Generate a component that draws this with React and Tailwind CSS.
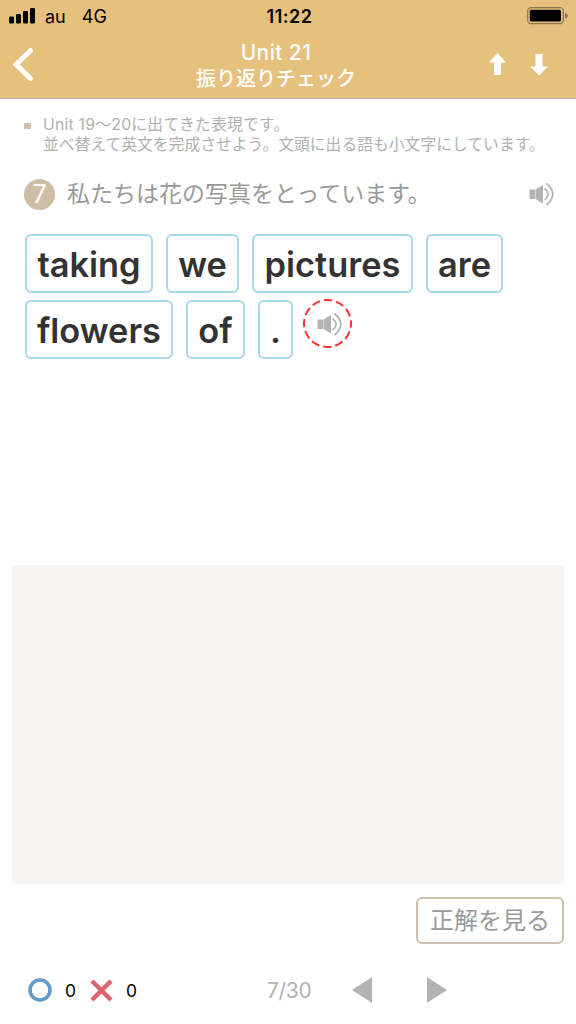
const WORDS = [
  [
    { text: 'taking', width: 'w-[128px]' },
    { text: 'we', width: 'w-[73px]' },
    { text: 'pictures', width: 'w-[161px]' },
    { text: 'are', width: 'w-[77px]' },
  ],
  [
    { text: 'flowers', width: 'w-[148px]' },
    { text: 'of', width: 'w-[59px]' },
    { text: '.', width: 'w-[35px]' },
  ],
];

const SpeakerIcon = () => (
  <svg width="26" height="24" viewBox="0 0 26 24" fill="none">
    <path d="M0.5 7.5H6V17H0.5Z" fill="#b3b3b3" />
    <path d="M6.5 7.5L14 3V21.5L6.5 17Z" fill="#b3b3b3" />
    <path d="M15.5 6.5Q22.5 12 15.5 18" stroke="#b3b3b3" strokeWidth="1.6" />
    <path d="M17.5 1.5Q30 12 17.5 23" stroke="#b3b3b3" strokeWidth="1.8" />
  </svg>
);

const StatusBar = () => (
  <div className="flex h-8 items-center text-black">
    <div className="flex flex-1 items-center pl-[9px]">
      <svg width="26" height="16" viewBox="0 0 26 16">
        <rect x="0" y="8.5" width="5" height="7" rx="1.3" />
        <rect x="7" y="6" width="5" height="9.5" rx="1.3" />
        <rect x="14" y="3" width="5" height="12.5" rx="1.3" />
        <rect x="21" y="0" width="5" height="15.5" rx="1.3" />
      </svg>
      <span className="ml-[10px] text-[18px]">au</span>
      <span className="ml-[16px] text-[18px]">4G</span>
    </div>
    <span className="pl-[2px] text-[18px] font-semibold tracking-[0.5px]">11:22</span>
    <div className="flex flex-1 justify-end pr-[8px]">
      <svg width="41" height="18" viewBox="0 0 41 18">
        <rect x="0.7" y="0.7" width="35.6" height="16" rx="3.5" fill="none" stroke="#8b744b" strokeWidth="1.3" />
        <rect x="2.8" y="2.8" width="31.2" height="11.8" rx="1.5" />
        <path d="M38 5.8Q40.8 6.8 40.8 8.8T38 11.8Z" fill="#8b744b" />
      </svg>
    </div>
  </div>
);

const Header = () => (
  <header className="h-[99px] border-b border-[#bfb5a7] bg-[#e5c17d]">
    <StatusBar />
    <div className="flex h-[66px] text-white">
      <div className="w-[110px] pl-[13px] pt-[15px]">
        <svg width="21" height="34" viewBox="0 0 21 34" fill="none">
          <path d="M17.5 3.5L3 17.5L17.5 31.5" stroke="currentColor" strokeWidth="5" strokeLinecap="round" />
        </svg>
      </div>
      <div className="w-[332px] pt-[8px] text-center font-medium">
        <h1 className="text-[21px] leading-[26px] tracking-[0.4px]">Unit 21</h1>
        <p className="text-[20px] leading-[26px]">振り返りチェック</p>
      </div>
      <div className="flex gap-[24px] pl-[47px] pt-[21px]">
        <svg width="17" height="23" viewBox="0 0 17 23" fill="currentColor">
          <path d="M8.5 0L17 9.5H12V22H5V9.5H0Z" />
        </svg>
        <svg width="18" height="23" viewBox="0 0 18 23" fill="currentColor">
          <path d="M5.5 1H12.5V13.5H18L9 22.5L0 13.5H5.5Z" />
        </svg>
      </div>
    </div>
  </header>
);

const WordChip = ({ text, width }) => (
  <button className={`${width} flex h-[59px] justify-center rounded-[6px] border-2 border-[#a5d8ea] text-[34.4px] leading-[57px] font-semibold text-[#333333]`}>
    {text}
  </button>
);

const App = () => {
  return (
    <div className="flex h-[1024px] w-[576px] flex-col overflow-hidden bg-white font-['Inter','Noto_Sans_CJK_JP',sans-serif] whitespace-nowrap">
      <Header />

      <main className="h-[466px]">
        <div className="flex h-[77px] pl-[24px] pt-[16px]">
          <span className="mt-[8px] h-[6px] w-[7px] bg-[#cfbda6]"></span>
          <p className="ml-[12px] text-[15.8px] leading-[20px] text-[#b0b0b0]">
            <span className="tracking-[0.22px]">Unit 19〜20に出てきた表現です。</span>
            <br />
            <span>並べ替えて英文を完成させよう。文頭に出る語も小文字にしています。</span>
          </p>
        </div>

        {/* Question */}
        <div className="flex h-[36px] items-center pl-[24px] pr-[21px]">
          <span className="flex size-[31px] items-center justify-center rounded-full bg-[#cfbda6] pt-px text-[25px] text-white">7</span>
          <p className="ml-[12px] flex-1 text-[23px] text-[#999999]">私たちは花の写真をとっています。</p>
          <SpeakerIcon />
        </div>

        {/* Word tiles */}
        <div className="space-y-[7px] pl-[25px] pt-[22px]">
          {WORDS.map((row, i) => (
            <div key={i} className="flex gap-[13px]">
              {row.map((word) => (
                <WordChip key={word.text} {...word} />
              ))}
              {i === 1 && (
                <div className="relative -mt-px -ml-[3px] flex size-[49px] items-center justify-center pl-[4px]">
                  <svg className="absolute inset-0" width="49" height="49" viewBox="0 0 49 49" fill="none">
                    <circle cx="24.5" cy="24.5" r="23.5" stroke="#fa2f35" strokeWidth="2" strokeDasharray="8.4 3.9" strokeDashoffset="4.2" />
                  </svg>
                  <SpeakerIcon />
                </div>
              )}
            </div>
          ))}
        </div>
      </main>

      {/* Answer area */}
      <div className="mx-[12px] h-[319px] bg-[#f6f5f3]"></div>

      <div className="flex h-[72px] justify-end pr-[12px] pt-[13px]">
        <button className="h-[47px] w-[148px] rounded-[6px] border-2 border-[#cfc0ad] text-[24px] leading-[44px] text-[#999999]">
          正解を見る
        </button>
      </div>

      <footer className="flex h-[68px] items-center pl-[28px] text-[17.5px] text-black">
        <svg width="24" height="24" viewBox="0 0 24 24" fill="none">
          <circle cx="12" cy="12" r="10" stroke="#619bc6" strokeWidth="3.6" />
        </svg>
        <span className="w-[38px] pl-[13px] pt-[2px]">0</span>
        <svg width="23" height="23" viewBox="0 0 23 23" fill="none">
          <path d="M2 2L21 21M21 2L2 21" stroke="#dc6470" strokeWidth="4.5" />
        </svg>
        <span className="w-[154px] pl-[13px] pt-[2px]">0</span>
        <span className="w-[85px] pt-[2px] text-[21px] tracking-[-0.3px] text-[#b3b3b3]">7/30</span>
        <svg width="20" height="27" viewBox="0 0 20 27" fill="#b3b3b3">
          <path d="M20 0V26L0 13Z" />
        </svg>
        <svg className="ml-[55px]" width="20" height="27" viewBox="0 0 20 27" fill="#b3b3b3">
          <path d="M0 0V26L20 13Z" />
        </svg>
      </footer>
    </div>
  );
};

export default App;
